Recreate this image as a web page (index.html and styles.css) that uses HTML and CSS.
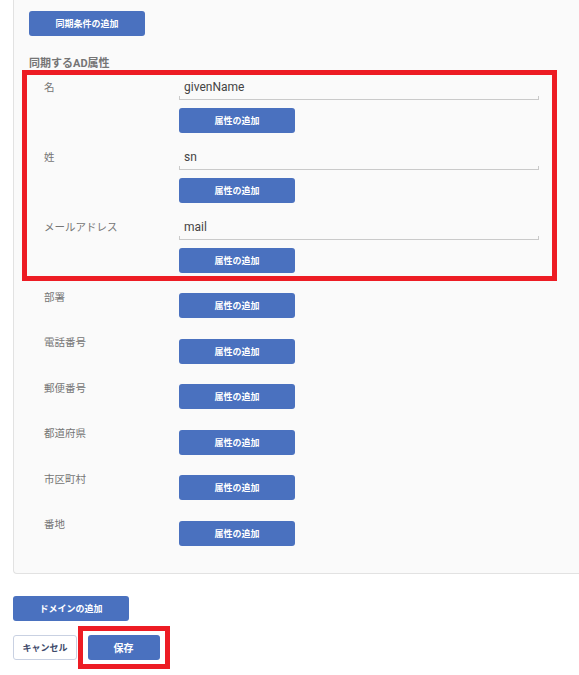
FILE: index.html
```html
<!DOCTYPE html>
<html lang="ja">
<head>
    <meta charset="UTF-8">
    <meta name="viewport" content="width=device-width, initial-scale=1.0">
    <title>ドメイン設定</title>
    <link rel="stylesheet" href="styles.css">
</head>
<body>
    <div class="panel">
        <button class="btn btn-wide">同期条件の追加</button>

        <h4 class="section-title">同期するAD属性</h4>

        <div class="highlight">
            <div class="attr-row">
                <div class="attr-label">名</div>
                <div class="attr-value">
                    <div class="field"><input type="text" class="field-input" value="givenName"></div>
                    <button class="btn btn-wide">属性の追加</button>
                </div>
            </div>
            <div class="attr-row">
                <div class="attr-label">姓</div>
                <div class="attr-value">
                    <div class="field"><input type="text" class="field-input" value="sn"></div>
                    <button class="btn btn-wide">属性の追加</button>
                </div>
            </div>
            <div class="attr-row">
                <div class="attr-label">メールアドレス</div>
                <div class="attr-value">
                    <div class="field"><input type="text" class="field-input" value="mail"></div>
                    <button class="btn btn-wide">属性の追加</button>
                </div>
            </div>
        </div>

        <div class="attr-row">
            <div class="attr-label">部署</div>
            <div class="attr-value"><button class="btn btn-wide">属性の追加</button></div>
        </div>
        <div class="attr-row">
            <div class="attr-label">電話番号</div>
            <div class="attr-value"><button class="btn btn-wide">属性の追加</button></div>
        </div>
        <div class="attr-row">
            <div class="attr-label">郵便番号</div>
            <div class="attr-value"><button class="btn btn-wide">属性の追加</button></div>
        </div>
        <div class="attr-row">
            <div class="attr-label">都道府県</div>
            <div class="attr-value"><button class="btn btn-wide">属性の追加</button></div>
        </div>
        <div class="attr-row">
            <div class="attr-label">市区町村</div>
            <div class="attr-value"><button class="btn btn-wide">属性の追加</button></div>
        </div>
        <div class="attr-row">
            <div class="attr-label">番地</div>
            <div class="attr-value"><button class="btn btn-wide">属性の追加</button></div>
        </div>
    </div>

    <div class="footer">
        <button class="btn btn-wide">ドメインの追加</button>
        <div class="actions">
            <button class="btn btn-cancel">キャンセル</button>
            <div class="highlight-small">
                <button class="btn btn-save">保存</button>
            </div>
        </div>
    </div>
</body>
</html>
```

FILE: styles.css
```css
body {
    margin: 0;
    padding: 0;
    background: #ffffff;
    font-family: Roboto, "Noto Sans CJK JP", sans-serif;
    color: #424242;
    overflow: hidden;
}

.panel {
    margin-left: 13px;
    padding: 11px 0 15px 15px;
    background: #fafafa;
    border: 1px solid #e2e2e2;
    border-top: none;
    border-right: none;
    border-radius: 0 0 0 4px;
}

.btn {
    display: block;
    height: 25px;
    padding: 0;
    border: none;
    border-radius: 3px;
    background: #4a71bf;
    color: #ffffff;
    font-family: Roboto, "Noto Sans CJK JP", sans-serif;
    font-size: 9px;
    font-weight: bold;
    cursor: pointer;
}

.btn-wide {
    width: 116px;
}

.section-title {
    margin: 20px 0 0 0;
    height: 14px;
    line-height: 16px;
    font-size: 11px;
    font-weight: bold;
    color: #757575;
}

.highlight {
    width: 535px;
    box-sizing: border-box;
    margin: 0 0 4px -7px;
    padding-left: 2px;
    border: 5px solid #ed1c24;
}

.highlight .attr-row:last-child {
    margin-bottom: 3.5px;
}

.attr-row {
    display: grid;
    grid-template-columns: 135px 360px;
    padding-left: 15px;
    margin-bottom: 12.5px;
}

.attr-label {
    padding-top: 3.75px;
    line-height: 17px;
    font-size: 10.5px;
    color: #757575;
}

.attr-value .btn {
    margin-top: 8px;
}

.field {
    height: 24.5px;
    box-sizing: border-box;
    border-bottom: 1px solid #cacaca;
    background:
        linear-gradient(#cacaca, #cacaca) left bottom / 1px 3px no-repeat,
        linear-gradient(#cacaca, #cacaca) right bottom / 1px 3px no-repeat;
}

.field-input {
    display: block;
    width: 100%;
    height: 100%;
    box-sizing: border-box;
    padding: 0 0 0 5px;
    border: none;
    outline: none;
    background: transparent;
    font-family: Roboto, "Noto Sans CJK JP", sans-serif;
    font-size: 12px;
    color: #444444;
}

.footer {
    margin: 22px 0 0 13px;
}

.actions {
    display: flex;
    align-items: center;
    margin-top: 5px;
}

.btn-cancel {
    width: 64px;
    background: #ffffff;
    border: 1px solid #c9d1e2;
    color: #3e4a6a;
}

.highlight-small {
    margin-left: 1px;
    padding: 4px 5px 3.5px 4.5px;
    border: 5px solid #ed1c24;
}

.btn-save {
    width: 72px;
    font-size: 10px;
}
```
